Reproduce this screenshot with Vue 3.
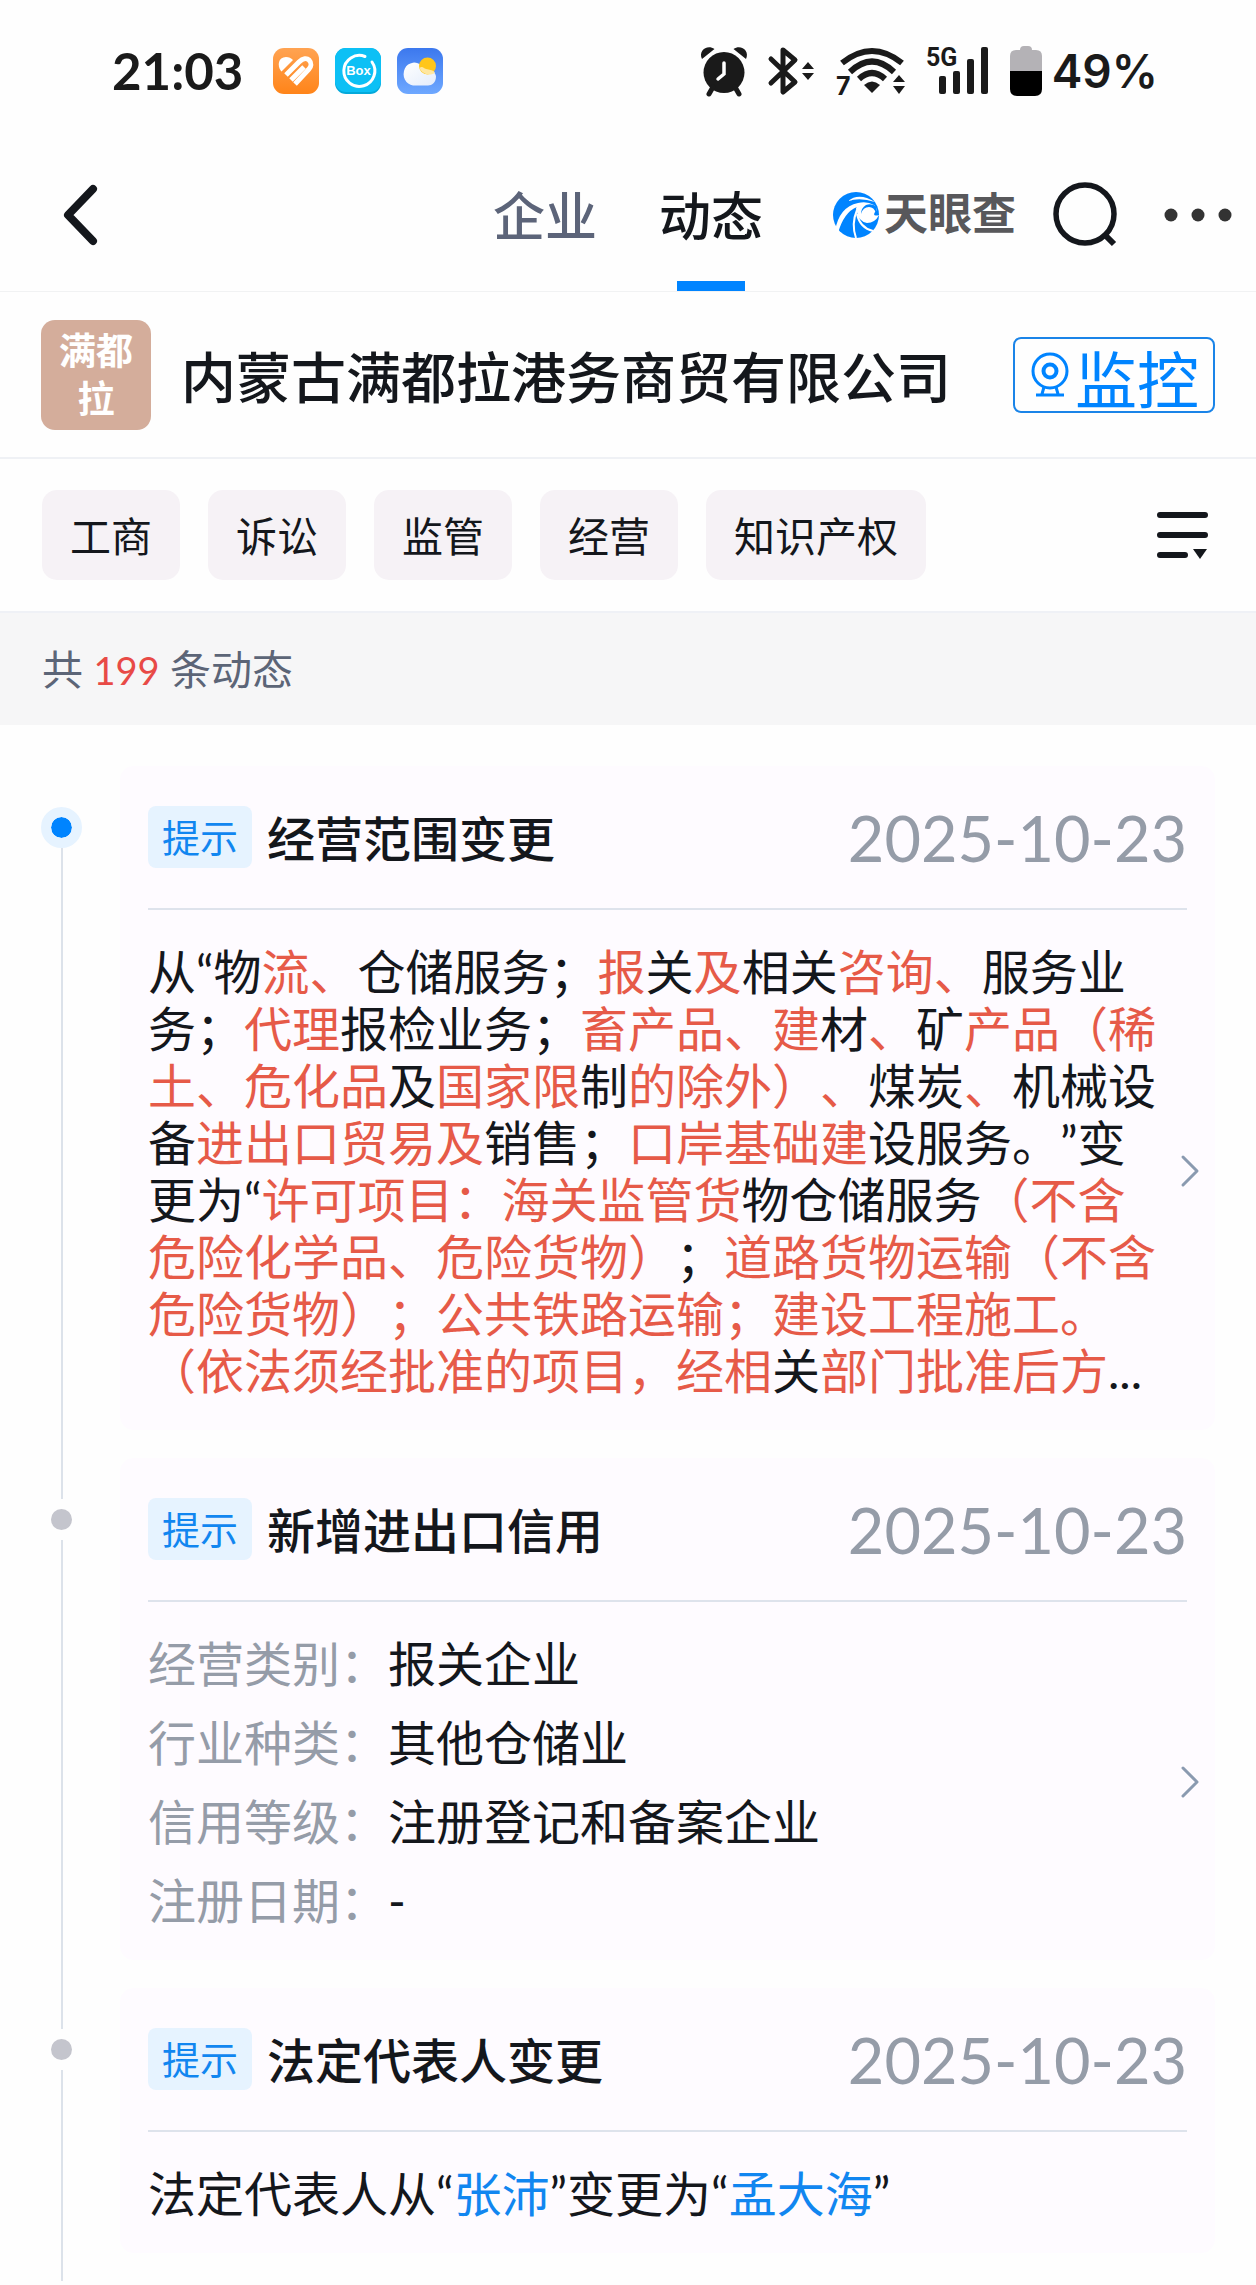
<script setup>
import { ref } from 'vue'

const abas = ['企业', '动态']
const abaAtiva = ref('动态')

const filtros = ['工商', '诉讼', '监管', '经营', '知识产权']

const total = 199

// tipo: '' = texto normal, 'red' = trecho alterado, 'link' = pessoa
const eventos = [
  {
    titulo: '经营范围变更',
    data: '2025-10-23',
    seta: true,
    texto: [
      ['从“物', ''],
      ['流、', 'red'],
      ['仓储服务；', ''],
      ['报', 'red'],
      ['关', ''],
      ['及', 'red'],
      ['相关', ''],
      ['咨询、', 'red'],
      ['服务业务；', ''],
      ['代理', 'red'],
      ['报检业务；', ''],
      ['畜产品、建', 'red'],
      ['材', ''],
      ['、', 'red'],
      ['矿', ''],
      ['产品（稀土、危化品', 'red'],
      ['及', ''],
      ['国家限', 'red'],
      ['制', ''],
      ['的除外）、', 'red'],
      ['煤炭', ''],
      ['、', 'red'],
      ['机械设备', ''],
      ['进出口贸易及', 'red'],
      ['销售；', ''],
      ['口岸基础建', 'red'],
      ['设服务。”变更为“', ''],
      ['许可项目：海关监管货', 'red'],
      ['物仓储服务', ''],
      ['（不含危险化学品、危险货物）', 'red'],
      ['；', ''],
      ['道路货物运输（不含危险货物）；公共铁路运输；建设工程施工。（依法须经批准的项目，经相', 'red'],
      ['关', ''],
      ['部门批准后方', 'red'],
      ['...', '']
    ]
  },
  {
    titulo: '新增进出口信用',
    data: '2025-10-23',
    seta: true,
    campos: [
      ['经营类别：', '报关企业'],
      ['行业种类：', '其他仓储业'],
      ['信用等级：', '注册登记和备案企业'],
      ['注册日期：', '-']
    ]
  },
  {
    titulo: '法定代表人变更',
    data: '2025-10-23',
    seta: false,
    texto: [
      ['法定代表人从“', ''],
      ['张沛', 'link'],
      ['”变更为“', ''],
      ['孟大海', 'link'],
      ['”', '']
    ]
  }
]
</script>

<template>
  <div class="page" lang="zh-CN">
    <div class="status">
      <div class="status-left">
        <span class="clock">21:03</span>
        <svg width="46" height="46" viewBox="0 0 46 46">
          <defs>
            <linearGradient id="g-orange" x1="0" y1="0" x2="0" y2="1">
              <stop offset="0" stop-color="#ffa352" />
              <stop offset="1" stop-color="#ff8419" />
            </linearGradient>
          </defs>
          <rect width="46" height="46" rx="11" fill="url(#g-orange)" />
          <path d="M8 23C4 18 5 9 13 9c3 0 5 1 7 3L8.500 23.500z" fill="#fff" />
          <path d="M13 27L26 14c4-4 8-4 10-2 3 3 2 7 0 9L22 36" fill="none" stroke="#fff" stroke-width="5" />
          <path d="M18 32L31 19" stroke="#fff" stroke-width="5" />
        </svg>
        <svg width="46" height="46" viewBox="0 0 46 46">
          <rect width="46" height="46" rx="11" fill="#04a9da" />
          <rect width="46" height="44" rx="11" fill="#0cc0f5" />
          <path d="M30 8.500A15.500 15.500 0 1 0 37 14" fill="none" stroke="#fff" stroke-width="3" stroke-linecap="round" />
          <text x="23.500" y="27" text-anchor="middle" class="box-text">Box</text>
        </svg>
        <svg width="46" height="46" viewBox="0 0 46 46">
          <defs>
            <linearGradient id="g-sky" x1="0" y1="0" x2="0" y2="1">
              <stop offset="0" stop-color="#3c78ee" />
              <stop offset="1" stop-color="#6ea8ff" />
            </linearGradient>
            <linearGradient id="g-cloud" x1="0" y1="0" x2="1" y2="1">
              <stop offset="0" stop-color="#ffffff" />
              <stop offset="1" stop-color="#e3ecfb" />
            </linearGradient>
          </defs>
          <rect width="46" height="46" rx="11" fill="url(#g-sky)" />
          <path d="M16 37.500a10.500 11.500 0 1 1 9-19c3 4 13 2 14 10 0 6-4 9-8 9z" fill="url(#g-cloud)" />
          <circle cx="30.500" cy="18" r="8.500" fill="#ffc61a" />
          <path d="M22.500 20c3-3 4 1 9 1.500 3 .5 5 1 6.500 3-4 4-13 2-15.500-4.500z" fill="#ffe7a0" />
        </svg>
      </div>
      <div class="status-right">
        <svg width="48" height="50" viewBox="0 0 48 50" fill="#1a1a1a">
          <circle cx="24" cy="26.500" r="20.500" />
          <path d="M2 13C-2 5 7-2 14.500 3z M46 13C50 5 41-2 33.500 3z" />
          <path d="M13 41l-4 7M35 41l4 7" stroke="#1a1a1a" stroke-width="5" stroke-linecap="round" />
          <path d="M24 17v11l-6 5" fill="none" stroke="#fff" stroke-width="3.500" stroke-linecap="round" />
        </svg>
        <svg width="48" height="50" viewBox="0 0 48 50" fill="#1a1a1a">
          <path d="M3 13l24 23-12 10V4l12 10L3 37" fill="none" stroke="#1a1a1a" stroke-width="5" stroke-linecap="round" stroke-linejoin="round" />
          <path d="M40 16l6 7H34zM40 34l6-7H34z" />
        </svg>
        <svg width="70" height="50" viewBox="0 0 70 50" fill="#1a1a1a">
          <g fill="none" stroke="#1a1a1a" stroke-width="6">
            <path d="M6 17Q36-7 66 17" />
            <path d="M14 26Q36 5 58 26" />
            <path d="M23 33Q36 21 49 33" />
          </g>
          <path d="M28 39q8-7 16 0l-8 8z" />
          <path d="M63 29l6 7H57zM63 48l6-8H57z" />
          <text x="0" y="49" class="wifi-text">7</text>
        </svg>
        <svg width="64" height="50" viewBox="0 0 64 50" fill="#1a1a1a">
          <text x="0" y="20" class="net-text">5G</text>
          <rect x="13" y="30" width="7" height="18" rx="2" />
          <rect x="27" y="25" width="7" height="23" rx="2" />
          <rect x="41" y="13" width="7" height="35" rx="2" />
          <rect x="55" y="1" width="7" height="47" rx="2" />
        </svg>
        <svg width="32" height="50" viewBox="0 0 32 50">
          <path d="M10 4q0-4 4-4h4q4 0 4 4h4q6 0 6 6v15H0V10q0-6 6-6z" fill="#b4b2b6" />
          <path d="M0 25h32v18q0 7-7 7H7q-7 0-7-7z" fill="#000" />
        </svg>
        <span class="percent">49%</span>
      </div>
    </div>

    <header class="topbar">
      <button class="icon-btn" aria-label="返回">
        <svg width="40" height="62" viewBox="0 0 40 62">
          <path d="M33 5L8 31l25 26" fill="none" stroke="#14171c" stroke-width="8" stroke-linecap="round" stroke-linejoin="round" />
        </svg>
      </button>
      <nav class="tabs">
        <a
          v-for="aba in abas"
          :key="aba"
          href="#"
          :class="['tab', { ativa: aba === abaAtiva }]"
          @click.prevent="abaAtiva = aba"
        >{{ aba }}</a>
      </nav>
      <div class="brand">
        <svg width="46" height="46" viewBox="0 0 46 46">
          <circle cx="23" cy="23" r="23" fill="#0084ff" />
          <path d="M15 9Q26 0 42 10Q27 5 15 9z" fill="#fff" />
          <path d="M2 39Q6 15 25 11Q34 9 41 13Q46 17 42 20Q39 25 46 23Q42 31 34 31Q25 29 24 20Q22 16 24 15Q11 20 5 41z" fill="#fff" />
          <path d="M44 15Q39 11 33 13Q28 16 28 22Q30 15 36 15Q41 15 43 21z" fill="#0084ff" />
          <path d="M24 18Q18 32 23 46" fill="none" stroke="#fff" stroke-width="2" />
          <path d="M24 22Q27 36 40 39" fill="none" stroke="#fff" stroke-width="2" />
        </svg>
        <span>天眼查</span>
      </div>
      <button class="icon-btn search" aria-label="搜索">
        <svg width="66" height="66" viewBox="0 0 66 66" fill="none" stroke="#14171c">
          <circle cx="33" cy="32" r="29" stroke-width="5.500" />
          <path d="M53 53l9 9" stroke-width="6" />
        </svg>
      </button>
      <button class="icon-btn more" aria-label="更多">
        <svg width="68" height="14" viewBox="0 0 68 14" fill="#333">
          <circle cx="7" cy="7" r="6.500" />
          <circle cx="34" cy="7" r="6.500" />
          <circle cx="61" cy="7" r="6.500" />
        </svg>
      </button>
    </header>

    <section class="company">
      <div class="avatar">满都拉</div>
      <h1>内蒙古满都拉港务商贸有限公司</h1>
      <button class="monitor">
        <svg width="38" height="46" viewBox="0 0 38 46" fill="none" stroke="#0084ff" stroke-width="3">
          <circle cx="19" cy="19" r="17" />
          <circle cx="19" cy="19" r="6.500" stroke-width="4" />
          <path d="M13 35l-2 7M25 35l2 7M5 43h28" />
        </svg>
        <span>监控</span>
      </button>
    </section>

    <section class="filters">
      <button v-for="filtro in filtros" :key="filtro" class="chip">{{ filtro }}</button>
      <button class="icon-btn list" aria-label="筛选">
        <svg width="52" height="50" viewBox="0 0 52 50">
          <path d="M4 5h45M4 25h45M4 45h25" stroke="#14171c" stroke-width="6" stroke-linecap="round" />
          <path d="M37 39h14l-7 10z" fill="#14171c" />
        </svg>
      </button>
    </section>

    <p class="count">共 <span>{{ total }}</span> 条动态</p>

    <ul class="timeline">
      <li v-for="(evento, index) in eventos" :key="index" class="item">
        <div class="rail">
          <i class="line-top"></i>
          <i class="dot"></i>
          <i class="line"></i>
        </div>
        <article class="card">
          <div class="card-head">
            <span class="tag">提示</span>
            <h2>{{ evento.titulo }}</h2>
            <time>{{ evento.data }}</time>
          </div>
          <div class="card-body">
            <p v-if="evento.texto" class="text"><template v-for="(parte, i) in evento.texto" :key="i"><a v-if="parte[1] === 'link'" href="#">{{ parte[0] }}</a><span v-else :class="parte[1]">{{ parte[0] }}</span></template></p>
            <dl v-else class="text">
              <div v-for="campo in evento.campos" :key="campo[0]">
                <dt>{{ campo[0] }}</dt>
                <dd>{{ campo[1] }}</dd>
              </div>
            </dl>
            <svg v-if="evento.seta" class="arrow" width="18" height="32" viewBox="0 0 18 32">
              <path d="M2 2l14 14L2 30" fill="none" stroke="#8a9ab0" stroke-width="3" stroke-linecap="round" stroke-linejoin="round" />
            </svg>
          </div>
        </article>
      </li>
    </ul>
  </div>
</template>

<style>
body {
  background: #fefefe;
}
</style>

<style scoped>
.page {
  font-family: Lato, "Noto Sans CJK SC", sans-serif;
  color: #14171c;
  text-spacing-trim: space-all;
}

h1,
h2,
p,
ul,
dl,
dd {
  margin: 0;
  padding: 0;
}

button {
  font-family: inherit;
  color: inherit;
  border: none;
  background: none;
  padding: 0;
  cursor: pointer;
}

a {
  text-decoration: none;
}

svg {
  display: block;
  flex: none;
  overflow: visible;
}

.status {
  display: flex;
  justify-content: space-between;
  align-items: center;
  height: 141px;
  padding: 0 98px 0 112px;
  box-sizing: border-box;
  color: #1a1a1a;
}

.status-left {
  display: flex;
  align-items: center;
  gap: 16px;
}

.clock {
  font-size: 51px;
  font-weight: bold;
  margin-right: 14px;
}

.status-right {
  display: flex;
  align-items: center;
  gap: 20px;
}

.percent {
  font-family: Inter, sans-serif;
  font-size: 46px;
  font-weight: 600;
  margin-left: -10px;
}

.box-text {
  font: bold 13px "Liberation Sans", sans-serif;
  fill: #fff;
}

.wifi-text {
  font: bold 25px Inter, sans-serif;
}

.net-text {
  font: bold 25px Roboto, sans-serif;
}

.topbar {
  display: flex;
  align-items: center;
  height: 151px;
  box-sizing: border-box;
  padding: 0 24px 2px 60px;
  border-bottom: 1px solid #f1f2f3;
}

.tabs {
  display: flex;
  gap: 62px;
  height: 100%;
  margin-left: auto;
}

.tab {
  position: relative;
  display: flex;
  align-items: center;
  padding-bottom: 4px;
  font-size: 52px;
  font-weight: 500;
  color: #5c6479;
}

.tab.ativa {
  color: #14171c;
}

.tab.ativa::after {
  content: "";
  position: absolute;
  left: 50%;
  bottom: -2px;
  width: 68px;
  height: 10px;
  margin-left: -34px;
  background: #0084ff;
}

.brand {
  display: flex;
  align-items: center;
  gap: 5px;
  margin-left: 70px;
  font-size: 44px;
  line-height: 60px;
  font-weight: bold;
  color: #58585b;
}

.brand span {
  padding-bottom: 4px;
}

.search {
  margin-left: 36px;
}

.more {
  margin-left: 46px;
}

.company {
  display: flex;
  align-items: center;
  height: 167px;
  box-sizing: border-box;
  padding: 0 41px;
  border-bottom: 2px solid #eff1f5;
}

.avatar {
  width: 110px;
  height: 110px;
  box-sizing: border-box;
  padding: 7px 16px;
  border-radius: 14px;
  background: #d4ad9b;
  color: #fff;
  font-size: 37px;
  font-weight: bold;
  line-height: 48px;
  text-align: center;
}

.company h1 {
  margin-left: 30px;
  padding-bottom: 2px;
  font-size: 55px;
  font-weight: 500;
  white-space: nowrap;
}

.monitor {
  display: flex;
  align-items: center;
  gap: 6px;
  height: 76px;
  box-sizing: border-box;
  margin-left: auto;
  padding: 0 14px 0 16px;
  border: 2px solid #1a84e8;
  border-radius: 8px;
  color: #0084ff;
}

.monitor span {
  padding-top: 10px;
  font-size: 62px;
  line-height: 66px;
}

.filters {
  display: flex;
  align-items: center;
  gap: 28px;
  height: 154px;
  box-sizing: border-box;
  padding: 0 48px 0 42px;
  border-bottom: 2px solid #eff1f6;
}

.chip {
  height: 90px;
  padding: 0 28px 2px;
  border-radius: 15px;
  background: #f6f2f6;
  font-size: 41px;
}

.list {
  margin-left: auto;
}

.count {
  padding: 2px 42px 0;
  background: #f6f6f7;
  color: #5c6577;
  font-size: 41px;
  line-height: 110px;
}

.count span {
  font-size: 38px;
  color: #e84a46;
}

.timeline {
  padding: 41px 41px 0;
  list-style: none;
}

.item {
  display: flex;
  gap: 38px;
}

.rail {
  display: flex;
  flex-direction: column;
  align-items: center;
  width: 41px;
  flex: none;
}

.line-top,
.line {
  width: 2px;
  background: #dce2ea;
}

.line-top {
  height: 41px;
}

.line {
  flex: 1;
}

.dot {
  width: 21px;
  height: 21px;
  border: 10px solid transparent;
  border-radius: 50%;
  background: #c4c5cd;
  background-clip: padding-box;
}

.item:first-child .line-top {
  background: none;
}

.item:first-child .dot {
  border-color: #e6f3ff;
  background-color: #0084ff;
}

.card {
  flex: 1;
  min-width: 0;
  margin-bottom: 28px;
  border-radius: 14px;
  background: #fefbff;
}

.card-head {
  display: flex;
  align-items: center;
  height: 144px;
  box-sizing: border-box;
  margin: 0 28px;
  border-bottom: 2px solid #dee3ec;
}

.tag {
  padding: 0 14px;
  border-radius: 8px;
  background: #e6f3ff;
  color: #1186f0;
  font-size: 38px;
  line-height: 62px;
}

.card-head h2 {
  margin-left: 15px;
  padding-bottom: 2px;
  font-size: 48px;
  font-weight: 500;
}

.card-head time {
  margin-left: auto;
  font-size: 63px;
  color: #959ca8;
}

.card-body {
  display: flex;
  align-items: center;
  gap: 22px;
  padding: 33px 16px 31px 28px;
}

.text {
  flex: 1;
  font-size: 48px;
  line-height: 57px;
}

.text .red {
  color: #e65a48;
}

.text a {
  color: #1186f0;
}

dl.text {
  display: flex;
  flex-direction: column;
  gap: 22px;
}

dl.text div {
  display: flex;
}

dl.text dt {
  color: #959ca8;
}
</style>
